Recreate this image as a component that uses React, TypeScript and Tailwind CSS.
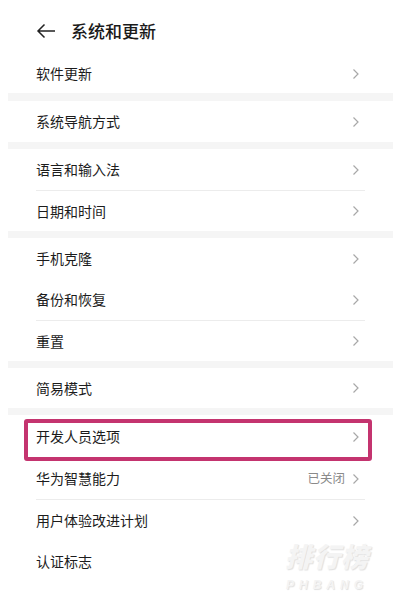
import React from "react";

const font = { fontFamily: '"Noto Sans CJK SC", "Noto Sans", sans-serif' };

function Chevron() {
  return (
    <svg width="8" height="12" viewBox="0 0 8 12" className="shrink-0">
      <polyline
        points="1.5,1.5 6,6 1.5,10.5"
        fill="none"
        stroke="#a8a8a8"
        strokeWidth="1.2"
      />
    </svg>
  );
}

interface RowProps {
  label: string;
  value?: string;
  h?: string;
  highlight?: boolean;
}

function Row({ label, value, h = "h-[41px]", highlight = false }: RowProps) {
  return (
    <div className={`relative flex ${h} items-center pl-9 pr-[41px]`}>
      <span className="text-[14px] text-[#1c1c1c]">{label}</span>
      <div className="flex-1" />
      {value && (
        <span className="mr-[7px] text-[12.5px] text-[#8a8a8a]">{value}</span>
      )}
      <Chevron />
      {highlight && (
        <div className="absolute left-6 right-[29px] top-[4px] h-[42px] rounded-[3px] border-4 border-[#c4346f]" />
      )}
    </div>
  );
}

const Divider = () => <div className="mx-9 h-px bg-[#ececec]" />;
const Band = ({ h = "h-[8px]" }: { h?: string }) => (
  <div className={`mx-2 ${h} bg-[#f5f5f5]`} />
);

export default function App() {
  return (
    <div className="relative h-[605px] w-[401px] overflow-hidden bg-white" style={font}>
      <div className="flex h-[54px] items-center pl-[36px]">
        <svg width="20" height="16" viewBox="0 0 20 16" className="mb-[-8px]">
          <path
            d="M19 8H2M8.5 1.5L2 8l6.5 6.5"
            fill="none"
            stroke="#222"
            strokeWidth="1.5"
          />
        </svg>
        <span className="ml-[15px] mt-[8px] text-[17px] font-medium text-[#1a1a1a]">
          系统和更新
        </span>
      </div>

      <Row label="软件更新" h="h-[39px]" />
      <Band />
      <Row label="系统导航方式" />
      <Band h="h-[7px]" />
      <Row label="语言和输入法" />
      <Divider />
      <Row label="日期和时间" h="h-[40px]" />
      <Band h="h-[7px]" />
      <Row label="手机克隆" />
      <Row label="备份和恢复" />
      <Divider />
      <Row label="重置" h="h-[40px]" />
      <Band h="h-[7px]" />
      <Row label="简易模式" h="h-[40px]" />
      <Band h="h-[7px]" />
      <Row label="开发人员选项" h="h-[43px]" highlight />
      <Row label="华为智慧能力" value="已关闭" />
      <Divider />
      <Row label="用户体验改进计划" />
      <Row label="认证标志" />

      {/* watermark */}
      <div className="pointer-events-none absolute left-[285px] top-[542px] flex flex-col items-center gap-[10px] italic text-[#f4f4f4] [text-shadow:1px_1px_1px_#e0e0e0]">
        <span className="text-[27px] font-black leading-[27px] tracking-[1px]">排行榜</span>
        <span
          className="text-[12px] font-black leading-[12px] tracking-[5px]"
          style={{ fontFamily: '"Liberation Sans", sans-serif' }}
        >
          PHBANG
        </span>
      </div>
    </div>
  );
}
